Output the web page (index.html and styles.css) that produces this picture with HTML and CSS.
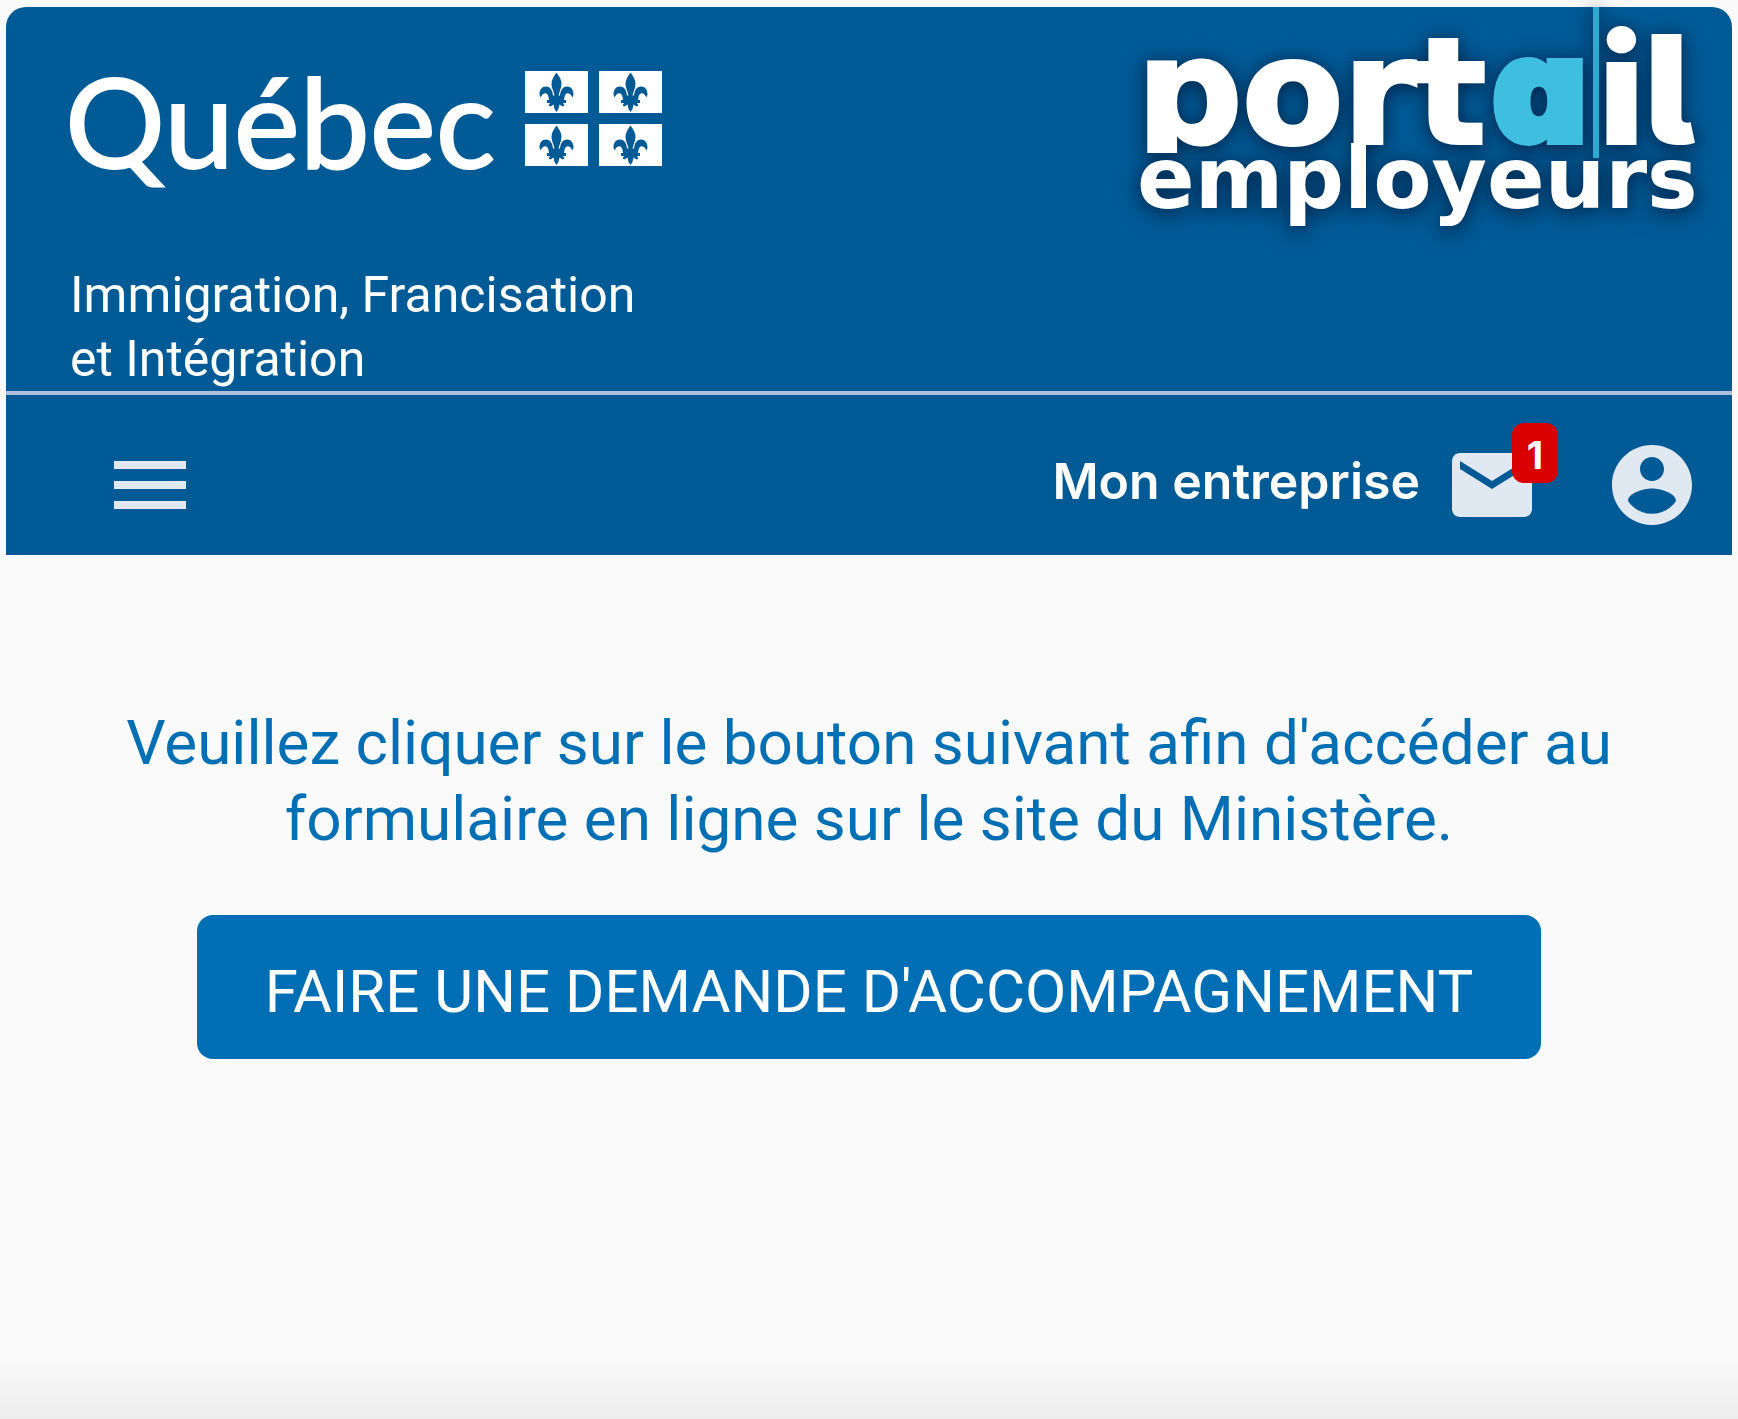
FILE: index.html
```html
<!DOCTYPE html>
<html lang="fr">
<head>
    <meta charset="UTF-8">
    <meta name="viewport" content="width=device-width, initial-scale=1.0">
    <title>Portail employeurs</title>
    <link rel="stylesheet" href="styles.css">
</head>
<body>
    <header class="header">
        <div class="banner">
            <div class="ministry">
                <a class="quebecLogo" href="#">
                    <svg width="594" height="124" viewBox="0 0 594 124" role="img" aria-label="Québec">
                        <defs>
                            <g id="flag">
                                <rect width="63" height="42" fill="#fff"/>
                                <path fill="#005a96" d="M31.500 1.500c3 4 5 7.500 5 11.500 0 4-2 7-3 11.500h1.500c.500-5 2.500-9 7-9 4 0 6.500 3 6.500 8l-1 3c-2-4-5-5.500-7-3-1.500 2-1 4-1.500 5.500h2v3h-3l1.500 2.500-2 1-3-2-1 4.500-2 3-2-3-1-4.500-3 2-2-1 1.500-2.500h-3v-3h2c-.500-1.500 0-3.500-1.500-5.500-2-2.500-5-1-7 3l-1-3c0-5 2.500-8 6.500-8 4.500 0 6.500 4 7 9h1.500c-1-4.500-3-7.500-3-11.500 0-4 2-7.500 5-11.500z"/>
                            </g>
                        </defs>
                        <text class="quebecText" x="-5" y="103">Québec</text>
                        <use href="#flag" x="455" y="6"/>
                        <use href="#flag" x="529" y="6"/>
                        <use href="#flag" x="455" y="59"/>
                        <use href="#flag" x="529" y="59"/>
                    </svg>
                </a>
                <p class="ministryName">Immigration, Francisation<br>et Intégration</p>
            </div>
            <a class="portalLogo" href="#">
                <svg width="564" height="230" viewBox="0 0 564 230" role="img" aria-label="Portail employeurs">
                    <defs>
                        <clipPath id="topLine"><rect x="-10" y="0" width="600" height="146"/></clipPath>
                    </defs>
                    <g clip-path="url(#topLine)">
                        <text class="portalWide" x="-3" y="136">port</text>
                        <text class="portalTail" x="459" y="138">il</text>
                        <text class="portalAccent" x="353" y="134">a</text>
                    </g>
                    <rect x="453" y="0" width="6" height="151" fill="#2fa9cf"/>
                    <text class="employersText" x="-3" y="201">employeurs</text>
                </svg>
            </a>
        </div>
        <nav class="toolbar">
            <button class="iconBtn" type="button" aria-label="Menu">
                <svg class="icon" viewBox="0 0 24 24"><path d="M3 18h18v-2H3v2zm0-5h18v-2H3v2zm0-7v2h18V6H3z"/></svg>
            </button>
            <div class="toolbarRight">
                <a class="companyLink" href="#">Mon entreprise</a>
                <button class="iconBtn mailBtn" type="button" aria-label="Messages">
                    <svg class="icon" viewBox="0 0 24 24"><path d="M20 4H4c-1.100 0-1.990.900-1.990 2L2 18c0 1.100.900 2 2 2h16c1.100 0 2-.900 2-2V6c0-1.100-.900-2-2-2zm0 4l-8 5-8-5V6l8 5 8-5v2z"/></svg>
                    <span class="badge">1</span>
                </button>
                <button class="iconBtn" type="button" aria-label="Mon compte">
                    <svg class="icon" viewBox="0 0 24 24"><path d="M12 2C6.480 2 2 6.480 2 12s4.480 10 10 10 10-4.480 10-10S17.520 2 12 2zm0 3c1.660 0 3 1.340 3 3s-1.340 3-3 3-3-1.340-3-3 1.340-3 3-3zm0 14.200c-2.500 0-4.710-1.280-6-3.220.030-1.990 4-3.080 6-3.080 1.990 0 5.970 1.090 6 3.080-1.290 1.940-3.500 3.220-6 3.220z"/></svg>
                </button>
            </div>
        </nav>
    </header>
    <main class="content">
        <p class="message">Veuillez cliquer sur le bouton suivant afin d'accéder au formulaire en ligne sur le site du Ministère.</p>
        <button class="requestBtn" type="button">FAIRE UNE DEMANDE D'ACCOMPAGNEMENT</button>
    </main>
    <div class="bottomShade"></div>
</body>
</html>
```
FILE: styles.css
```css
* {
    box-sizing: border-box;
}
body {
    margin: 0;
    min-height: 100vh;
    display: flex;
    flex-direction: column;
    background-color: #fafafa;
    font-family: Roboto, sans-serif;
}
.header {
    margin: 7px 6px 0;
    background-color: #005a96;
    border-radius: 20px 20px 0 0;
    color: white;
}
.banner {
    display: flex;
    justify-content: space-between;
    align-items: flex-start;
    padding: 0 28px 0 64px;
    border-bottom: 4px solid #b1bedb;
}
.ministry {
    padding-top: 58px;
}
.quebecLogo, .portalLogo {
    display: block;
}
.quebecLogo svg, .portalLogo svg {
    display: block;
    overflow: visible;
}
.quebecText {
    font-family: Lato, sans-serif;
    font-size: 125px;
    fill: white;
    stroke: white;
    stroke-width: 2px;
}
.ministryName {
    margin: 74px 0 0;
    font-size: 50px;
    line-height: 64px;
}
.portalLogo svg {
    filter: drop-shadow(0 2px 8px rgba(0, 20, 50, 0.5)) drop-shadow(0 4px 10px rgba(0, 20, 50, 0.4));
}
.portalWide {
    font-family: "DejaVu Sans", sans-serif;
    font-size: 147px;
    font-weight: 700;
    fill: white;
    stroke: white;
    stroke-width: 4px;
}
.portalTail, .portalAccent {
    font-family: Inter, sans-serif;
    font-feature-settings: "cv11" 1, "cv05" 1;
    font-weight: 900;
}
.portalTail {
    font-size: 152px;
    fill: white;
}
.portalAccent {
    font-size: 144px;
    fill: #3fbfdf;
    stroke: #3fbfdf;
    stroke-width: 8px;
}
.employersText {
    font-family: "DejaVu Sans", sans-serif;
    font-size: 85px;
    font-weight: 700;
    fill: white;
}
.toolbar {
    display: flex;
    justify-content: space-between;
    align-items: center;
    height: 160px;
    padding: 20px 32px 0 96px;
}
.toolbarRight {
    display: flex;
    align-items: center;
}
.companyLink {
    margin-right: 24px;
    padding-bottom: 8px;
    color: white;
    font-family: Inter, sans-serif;
    font-size: 50px;
    font-weight: 600;
    text-decoration: none;
}
.iconBtn {
    position: relative;
    padding: 0;
    border: none;
    background: none;
    cursor: pointer;
}
.mailBtn {
    margin-right: 64px;
}
.icon {
    display: block;
    width: 96px;
    height: 96px;
    fill: #e0e9f2;
}
.badge {
    position: absolute;
    top: -14px;
    right: -18px;
    width: 46px;
    height: 60px;
    border-radius: 12px;
    background-color: #d80000;
    color: white;
    font-family: Inter, sans-serif;
    font-size: 38px;
    font-weight: 700;
    line-height: 64px;
    text-align: center;
}
.content {
    flex: 1;
    padding: 150px 100px 0;
    text-align: center;
}
.message {
    margin: 0 0 58px;
    color: #006fb4;
    font-size: 62px;
    font-weight: 400;
    line-height: 76px;
}
.requestBtn {
    height: 144px;
    padding: 8px 68px 0;
    border: none;
    border-radius: 16px;
    background-color: #006eb4;
    color: white;
    font-family: Roboto, sans-serif;
    font-size: 60px;
    cursor: pointer;
}
.bottomShade {
    height: 64px;
    background: linear-gradient(#fafafa, #ededed);
}
```
